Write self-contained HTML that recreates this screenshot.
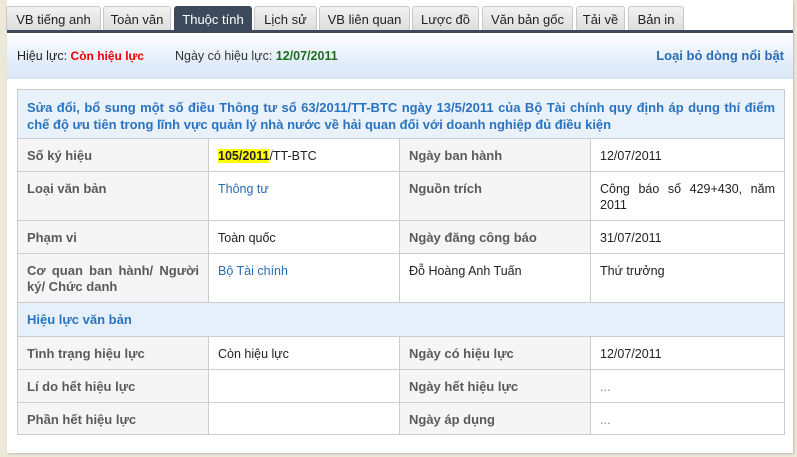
<!DOCTYPE html>
<html><head><meta charset="utf-8"><style>
*{margin:0;padding:0;box-sizing:border-box}
body{width:797px;height:457px;background:#ece9d8;font-family:"Liberation Sans",Arial,sans-serif;font-size:12px;position:relative;overflow:hidden}
#panel{position:absolute;left:7px;top:0;width:786px;height:453px;background:#fff;box-shadow:1px 1px 2px #bbb}
.tab{position:absolute;top:6px;height:25px;background:linear-gradient(#f2f2f2,#dcdcdc);border:1px solid #c8c8c8;border-bottom:none;border-radius:3px 3px 0 0;color:#222;font-size:13px;line-height:25px;text-align:center}
.tab.act{background:#3d4a5c;color:#fff;border-color:#3d4a5c}
#bar{position:absolute;left:7px;top:30px;width:786px;height:3px;background:#3d4a5c}
#status{position:absolute;left:7px;top:33px;width:786px;height:46px;background:linear-gradient(#fff,#e4eefa 60%,#dbe8f7);border-bottom:2px solid #d5e3f3;font-size:12.5px}
table{position:absolute;left:17px;top:89px;width:768px;border-collapse:collapse;font-size:12px}
td{border:1px solid #ccc;padding:0 9px;vertical-align:top;padding-top:9px;line-height:16px}
td.l{background:#f5f5f5;color:#5a5a5a;font-weight:bold;font-size:13px}
td.v{color:#222;font-size:12.5px}
a{color:#2a6bb5;text-decoration:none}
.title{background:#e9f1fb;color:#2a73c0;font-weight:bold;font-size:13px;line-height:17px;padding:9px 9px 0;text-align:justify}
.sec{background:#e6f0fb;color:#2a73c0;font-weight:bold;font-size:13px}
</style></head><body>
<div id="panel"></div>
<div class="tab" style="left:6px;width:95px">VB tiếng anh</div>
<div class="tab" style="left:103px;width:68px">Toàn văn</div>
<div class="tab act" style="left:174px;width:78px">Thuộc tính</div>
<div class="tab" style="left:254px;width:63px">Lịch sử</div>
<div class="tab" style="left:319px;width:91px">VB liên quan</div>
<div class="tab" style="left:412px;width:67px">Lược đồ</div>
<div class="tab" style="left:482px;width:91px">Văn bản gốc</div>
<div class="tab" style="left:576px;width:49px">Tải về</div>
<div class="tab" style="left:628px;width:56px">Bản in</div>
<div id="bar"></div>
<div id="status">
<span style="position:absolute;left:10px;top:16px;color:#222">Hiệu lực: <b style="color:#e00;font-size:12px">Còn hiệu lực</b></span>
<span style="position:absolute;left:168px;top:16px;color:#333">Ngày có hiệu lực: <b style="color:#1a6e1a">12/07/2011</b></span>
<b style="position:absolute;right:9px;top:15px;color:#2a6bb5;font-size:13px">Loại bỏ dòng nổi bật</b>
</div>
<table>
<tr style="height:49px"><td colspan="4" class="title">Sửa đổi, bổ sung một số điều Thông tư số 63/2011/TT-BTC ngày 13/5/2011 của Bộ Tài chính quy định áp dụng thí điểm chế độ ưu tiên trong lĩnh vực quản lý nhà nước về hải quan đối với doanh nghiệp đủ điều kiện</td></tr>
<tr style="height:33px"><td class="l" style="width:191px">Số ký hiệu</td><td class="v" style="width:191px"><b style="background:#ff0">105/2011</b>/TT-BTC</td><td class="l" style="width:191px">Ngày ban hành</td><td class="v">12/07/2011</td></tr>
<tr style="height:49px"><td class="l">Loại văn bản</td><td class="v"><a>Thông tư</a></td><td class="l">Nguồn trích</td><td class="v" style="text-align:justify">Công báo số 429+430, năm 2011</td></tr>
<tr style="height:33px"><td class="l">Phạm vi</td><td class="v">Toàn quốc</td><td class="l">Ngày đăng công báo</td><td class="v">31/07/2011</td></tr>
<tr style="height:49px"><td class="l" style="text-align:justify">Cơ quan ban hành/ Người ký/ Chức danh</td><td class="v"><a>Bộ Tài chính</a></td><td class="v">Đỗ Hoàng Anh Tuấn</td><td class="v">Thứ trưởng</td></tr>
<tr style="height:34px"><td colspan="4" class="sec">Hiệu lực văn bản</td></tr>
<tr style="height:33px"><td class="l">Tình trạng hiệu lực</td><td class="v">Còn hiệu lực</td><td class="l">Ngày có hiệu lực</td><td class="v">12/07/2011</td></tr>
<tr style="height:33px"><td class="l">Lí do hết hiệu lực</td><td class="v"></td><td class="l">Ngày hết hiệu lực</td><td class="v" style="color:#888">...</td></tr>
<tr style="height:32px"><td class="l">Phần hết hiệu lực</td><td class="v"></td><td class="l">Ngày áp dụng</td><td class="v" style="color:#888">...</td></tr>
</table>
</body></html>
